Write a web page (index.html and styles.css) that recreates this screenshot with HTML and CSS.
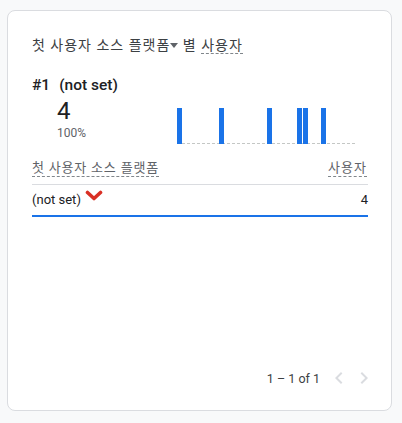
FILE: index.html
```html
<!DOCTYPE html>
<html lang="ko">
<head>
<meta charset="utf-8">
<link rel="stylesheet" href="styles.css">
</head>
<body>
<div class="card">
  <div class="title">첫 사용자 소스 플랫폼<span class="caret"></span> 별 <span class="dashed">사용자</span></div>
  <div class="rank"><span class="num">#1</span><span class="name">(not set)</span></div>
  <div class="metric-row">
    <div class="metric">
      <div class="value">4</div>
      <div class="pct">100%</div>
    </div>
    <div class="chart">
      <div class="bar" style="left:0px"></div>
      <div class="bar" style="left:42px"></div>
      <div class="bar" style="left:90px"></div>
      <div class="bar" style="left:120px"></div>
      <div class="bar" style="left:126px"></div>
      <div class="bar" style="left:144px"></div>
    </div>
  </div>
  <div class="thead">
    <span class="th">첫 사용자 소스 플랫폼</span>
    <span class="th">사용자</span>
  </div>
  <div class="trow">
    <span class="cell">(not set)<svg class="chev" width="18" height="11" viewBox="0 0 18 11"><path d="M2.5 2.5 L9 8.5 L15.5 2.5" fill="none" stroke="#d93025" stroke-width="3.6" stroke-linecap="round" stroke-linejoin="round"/></svg></span>
    <span class="cell">4</span>
  </div>
  <div class="pager">
    <span class="range">1 – 1 of 1</span>
    <svg class="pg" width="24" height="24" viewBox="0 0 24 24"><path d="M15.41 7.41 14 6l-6 6 6 6 1.41-1.41L10.83 12z" fill="#dadce0"/></svg>
    <svg class="pg" width="24" height="24" viewBox="0 0 24 24"><path d="M8.59 16.59 10 18l6-6-6-6-1.41 1.41L13.17 12z" fill="#dadce0"/></svg>
  </div>
</div>
</body>
</html>
```

FILE: styles.css
```css
html, body {
  margin: 0;
  padding: 0;
}
body {
  background: #f8f9fa;
  padding: 10px 0 0 7px;
  font-family: Roboto, "Noto Sans CJK KR", sans-serif;
  color: #202124;
}
.card {
  box-sizing: border-box;
  width: 385px;
  height: 401px;
  background: #fff;
  border: 1px solid #dadce0;
  border-radius: 8px;
  padding: 24px 24px 20px 24px;
  display: flex;
  flex-direction: column;
}
.title {
  font-size: 14px;
  line-height: 20px;
  color: #3c4043;
  white-space: nowrap;
  letter-spacing: 1px;
}
.caret {
  display: inline-block;
  width: 0;
  height: 0;
  border-left: 4.5px solid transparent;
  border-right: 4.5px solid transparent;
  border-top: 5px solid #5f6368;
  margin: 0 0 2px 0;
  vertical-align: middle;
}
.dashed {
  display: inline-block;
  line-height: 16px;
  border-bottom: 1px dashed #80868b;
}
.rank {
  margin-top: 20px;
  font-size: 15.5px;
  line-height: 20px;
  font-weight: 500;
  color: #202124;
  display: flex;
  gap: 9px;
}
.metric-row {
  display: flex;
  margin-top: 2px;
}
.metric {
  width: 120px;
  padding-left: 25px;
}
.value {
  font-size: 24px;
  line-height: 28px;
  color: #202124;
}
.pct {
  font-size: 12px;
  line-height: 17px;
  color: #5f6368;
}
.chart {
  position: relative;
  width: 178px;
  height: 36px;
  margin-top: 10px;
  border-bottom: 1px dashed #c4c7c5;
}
.bar {
  position: absolute;
  bottom: -1px;
  width: 5px;
  height: 36px;
  background: #1a73e8;
}
.thead {
  margin-top: 15px;
  display: flex;
  justify-content: space-between;
  padding-bottom: 7px;
  border-bottom: 1px solid #dadce0;
  margin-right: -1px;
}
.th {
  font-size: 13px;
  line-height: 17px;
  color: #5f6368;
  border-bottom: 1px dashed #80868b;
  letter-spacing: 0.8px;
}
.th:last-child {
  letter-spacing: 1px;
  margin-right: 1px;
}
.trow {
  height: 30px;
  display: flex;
  justify-content: space-between;
  align-items: center;
  border-bottom: 2px solid #1a73e8;
  margin-right: -1px;
}
.cell {
  font-size: 13px;
  line-height: 16px;
  color: #202124;
  display: flex;
  align-items: center;
}
.chev {
  margin-left: 4px;
  margin-top: -9px;
}
.pager {
  margin-top: auto;
  display: flex;
  justify-content: flex-end;
  align-items: center;
  margin-right: -9px;
  height: 24px;
}
.range {
  font-size: 12.5px;
  color: #3c4043;
  margin-right: 6px;
}
.pg {
  display: block;
  margin-left: 1px;
}
```
